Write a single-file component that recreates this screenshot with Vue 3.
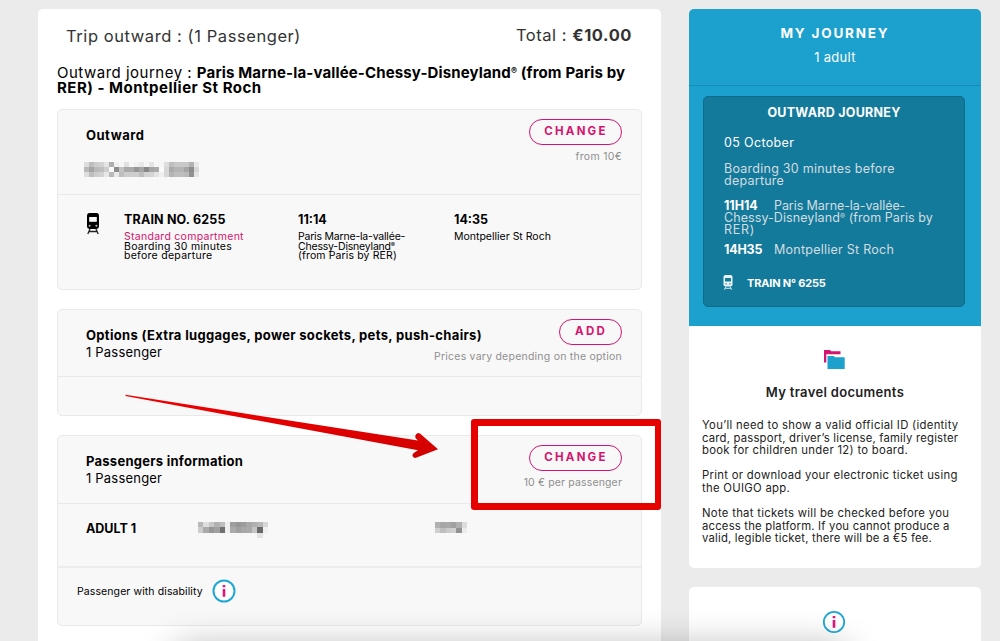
<script setup>
// 打码区域的灰度值，每个数字是一格
const dateMosaic = [
  [222, 190, 205, 210, 228, 175, 240, 246, 225, 246, 240, 232, 246, 228, 246, 246, 222, 190, 200, 200, 200, 178, 232],
  [185, 165, 185, 190, 205, 250, 140, 195, 170, 170, 150, 165, 135, 165, 170, 250, 215, 170, 180, 180, 165, 140, 215],
  [222, 190, 205, 210, 232, 185, 232, 190, 205, 205, 205, 190, 210, 212, 228, 240, 215, 180, 190, 190, 185, 145, 228]
]
const nameMosaic = [
  [184, 222, 200, 178, 190, 240, 158, 150, 156, 168, 176, 184, 214],
  [205, 170, 150, 160, 112, 240, 170, 160, 168, 170, 196, 104, 240],
  [247, 247, 247, 247, 247, 247, 247, 247, 247, 247, 247, 226, 247]
]
const birthMosaic = [
  [178, 166, 168, 160, 176, 220],
  [208, 190, 202, 208, 146, 236]
]

const flatten = (rows) =>
  rows.flatMap((row, y) => row.map((v, x) => ({ x, y, fill: `rgb(${v},${v},${v})` })))

const dateCells = flatten(dateMosaic)
const nameCells = flatten(nameMosaic)
const birthCells = flatten(birthMosaic)
</script>

<template>
  <div class="page">
    <main class="trip">
      <header class="trip-head">
        <h1>Trip outward : (1 Passenger)</h1>
        <p class="total">Total : <b>€10.00</b></p>
      </header>
      <p class="route">
        <span class="route-label">Outward journey : </span><b>Paris Marne-la-vallée-Chessy-Disneyland<sup>®</sup> (from Paris by<br /><span class="route-end">RER) - Montpellier St Roch</span></b>
      </p>

      <section class="panel outward">
        <div class="panel-head">
          <div class="heading">
            <h2 class="t-outward">Outward</h2>
            <svg class="mosaic-date" viewBox="0 0 23 3" preserveAspectRatio="none" shape-rendering="crispEdges">
              <rect v-for="(c, i) in dateCells" :key="i" :x="c.x" :y="c.y" width="1" height="1" :fill="c.fill" />
            </svg>
          </div>
          <div class="action">
            <button class="pill">CHANGE</button>
            <p class="t-from">from 10€</p>
          </div>
        </div>
        <div class="train-row">
          <svg class="train-icon" viewBox="0 0 14 22">
            <path fill="#000" d="M3.500 0h7Q13 0 13 3v10q0 3-3 3H4q-3 0-3-3V3q0-3 2.500-3z" />
            <path fill="#f8f8f8" d="M3.200 4h7.600v4.800H3.200z" />
            <circle cx="3.600" cy="12.700" r="1" fill="#bbb" />
            <circle cx="10.400" cy="12.700" r="1" fill="#bbb" />
            <path fill="none" stroke="#222" stroke-width="1.300" d="M4 16l-2.200 5M10 16l2.200 5M3 18.500h8" />
          </svg>
          <div class="col-train">
            <h3 class="t-train">TRAIN NO. 6255</h3>
            <p><span class="pink">Standard compartment</span><br />Boarding 30 minutes<br />before departure</p>
          </div>
          <div class="col-from">
            <h3>11:14</h3>
            <p>Paris Marne-la-vallée-<br />Chessy-Disneyland<sup>®</sup><br /><span class="by-rer">(from Paris by RER)</span></p>
          </div>
          <div class="col-to">
            <h3>14:35</h3>
            <p>Montpellier St Roch</p>
          </div>
        </div>
      </section>

      <section class="panel options">
        <div class="panel-head">
          <div class="heading">
            <h2 class="t-options">Options (Extra luggages, power sockets, pets, push-chairs)</h2>
            <p class="count">1 Passenger</p>
          </div>
          <div class="action">
            <button class="pill small">ADD</button>
            <p class="t-prices">Prices vary depending on the option</p>
          </div>
        </div>
      </section>

      <section class="panel passengers">
        <div class="panel-head">
          <div class="heading">
            <h2 class="t-info">Passengers information</h2>
            <p class="count">1 Passenger</p>
          </div>
          <div class="action">
            <button class="pill">CHANGE</button>
            <p class="t-per">10 € per passenger</p>
          </div>
        </div>
        <div class="adult-row">
          <h3>ADULT 1</h3>
          <svg class="mosaic-name" viewBox="0 0 13 3" preserveAspectRatio="none" shape-rendering="crispEdges">
            <rect v-for="(c, i) in nameCells" :key="i" :x="c.x" :y="c.y" width="1" height="1" :fill="c.fill" />
          </svg>
          <svg class="mosaic-birth" viewBox="0 0 6 2" preserveAspectRatio="none" shape-rendering="crispEdges">
            <rect v-for="(c, i) in birthCells" :key="i" :x="c.x" :y="c.y" width="1" height="1" :fill="c.fill" />
          </svg>
        </div>
        <div class="disability-row">
          <span>Passenger with disability</span>
          <svg class="info-icon" viewBox="0 0 24 24">
            <circle cx="12" cy="12" r="10.500" fill="#fff" stroke="#1fa8d5" stroke-width="2" />
            <path fill="#e0157a" d="M10.700 6h2.600v2.200h-2.600zM10.700 10h2.600v7.700h-2.600z" />
          </svg>
        </div>
      </section>
    </main>

    <aside class="side">
      <section class="journey">
        <header>
          <h2>MY JOURNEY</h2>
          <p>1 adult</p>
        </header>
        <div class="journey-box">
          <h3>OUTWARD JOURNEY</h3>
          <p class="date">05 October</p>
          <p class="boarding">Boarding 30 minutes before<br />departure</p>
          <p class="stop"><b>11H14</b>Paris Marne-la-vallée-<br /><span class="disney">Chessy-Disneyland<sup>®</sup> (from Paris by</span><br /><span class="rer">RER)</span></p>
          <p class="stop arrival"><b>14H35</b>Montpellier St Roch</p>
          <div class="train-no">
            <svg viewBox="0 0 10 15">
              <path fill="#e8f4f8" d="M2.500 0h5Q9.500 0 9.500 2v7.500q0 2-2 2h-5q-2 0-2-2V2q0-2 2-2z" />
              <path fill="#147a9b" d="M2 3h6v3.500H2zM2.500 8.300h1.200v1.200H2.500zM6.300 8.300h1.200v1.200H6.300z" />
              <path fill="none" stroke="#d5e8ee" d="M3 11.500l-1.700 3.200M7 11.500l1.700 3.200M2 13.300h6" />
            </svg>
            <span>TRAIN N° 6255</span>
          </div>
        </div>
      </section>

      <section class="docs">
        <svg class="folder-icon" viewBox="0 0 21 20">
          <path fill="#d4146e" d="M0 0h6l1.200 1.200h9.300v3H2.300V12.500H0z" />
          <path fill="#1ca1cf" d="M3.500 6h6.300l1.200 1.300h9.700V19H3.500z" />
        </svg>
        <h3>My travel documents</h3>
        <p>You’ll need to show a valid official ID (identity<br /><span class="tight">card, passport, driver’s license, family register</span><br />book for children under 12) to board.</p>
        <p>Print or download your electronic ticket using<br />the OUIGO app.</p>
        <p>Note that tickets will be checked before you<br /><span class="tight">access the platform. If you cannot produce a<br />valid, legible ticket, there will be a €5 fee.</span></p>
      </section>

      <section class="help">
        <svg class="info-icon" viewBox="0 0 24 24">
          <circle cx="12" cy="12" r="10.200" fill="#fff" stroke="#1fa8d5" stroke-width="1.800" />
          <path fill="#e0157a" d="M10.700 6h2.600v2.200h-2.600zM10.700 10h2.600v7.700h-2.600z" />
        </svg>
      </section>
    </aside>

    <!-- 标注箭头与红框 -->
    <svg class="arrow" viewBox="0 0 330 80">
      <defs>
        <linearGradient id="arrowFill" x1="0" y1="0" x2="0" y2="1">
          <stop offset="0" stop-color="#f20000" />
          <stop offset="1" stop-color="#cf0000" />
        </linearGradient>
      </defs>
      <path fill="url(#arrowFill)" d="M5.500 4.800L298 50.500l-2.500-2.500q-1-4 2.500-5 1.500 0 2.500 1L318 59.300 296 67.800q-3 .500-3.500-2-.200-1.700 1.500-3l4-2.500L5.500 6z" />
    </svg>
    <div class="frame"></div>
    <div class="dock-shadow"></div>
  </div>
</template>

<style>
html,
body {
  margin: 0;
  overflow: hidden;
  background: #ebebeb;
}
</style>

<style scoped>
.page {
  position: relative;
  box-sizing: border-box;
  width: 1000px;
  height: 641px;
  padding: 9px 19px 0 38px;
  display: flex;
  justify-content: space-between;
  overflow: hidden;
  background: #ebebeb;
  font-family: Inter, "Liberation Sans", sans-serif;
  color: #000;
}

h1,
h2,
h3,
p {
  margin: 0;
  font-weight: 400;
  white-space: nowrap;
}

b,
h2,
h3 {
  font-weight: 700;
}

sup {
  font-size: 0.6em;
  line-height: 0;
  vertical-align: 0.42em;
}

/* 左侧行程 */
.trip {
  box-sizing: border-box;
  width: 623px;
  height: 660px;
  padding: 0 19px;
  background: #fff;
  border-radius: 5px;
}

.trip-head {
  display: flex;
  justify-content: space-between;
  height: 56px;
  padding: 16px 10px 0 9px;
  box-sizing: border-box;
  color: #333;
}

.trip-head h1 {
  font-size: 16.5px;
  line-height: 22px;
  letter-spacing: 0.57px;
}

.total {
  font-size: 16.5px;
  line-height: 20px;
  letter-spacing: 0.55px;
}

.route {
  height: 44px;
  font-size: 15px;
  line-height: 15px;
  letter-spacing: 0.14px;
}

.route-label {
  letter-spacing: 0.5px;
}

.route-end {
  letter-spacing: 0.5px;
}

.panel {
  box-sizing: border-box;
  width: 585px;
  border: 1px solid #e9e9e9;
  border-radius: 5px;
  background: #f8f8f8;
  margin-bottom: 19px;
}

.panel-head {
  box-sizing: border-box;
  display: flex;
  justify-content: space-between;
  padding: 9px 19px 0 28px;
  border-bottom: 1px solid #e9e9e9;
}

.heading {
  min-width: 0;
}

.panel h2 {
  font-size: 13px;
  line-height: 17px;
}

.action {
  display: flex;
  flex-direction: column;
  flex-shrink: 0;
  align-items: flex-end;
}

.action p {
  font-size: 10.5px;
  line-height: 13px;
  margin-top: 5px;
  color: #8f8f8f;
}

.pill {
  box-sizing: border-box;
  width: 93px;
  height: 26px;
  padding: 0 0 2px 1px;
  border: 1px solid #d4146e;
  border-radius: 13px;
  background: transparent;
  color: #d4146e;
  font-family: inherit;
  font-size: 11.5px;
  font-weight: 700;
  letter-spacing: 2.2px;
}

.pill.small {
  width: 63px;
}

.outward {
  height: 181px;
}

.outward .panel-head {
  height: 85px;
}

.panel h2.t-outward {
  padding-top: 8px;
  letter-spacing: 0.5px;
}

.t-options {
  letter-spacing: 0.33px;
}

.t-info {
  letter-spacing: 0.26px;
}

.action .t-from {
  letter-spacing: 0.3px;
}

.action .t-prices {
  letter-spacing: 0.23px;
}

.action .t-per {
  letter-spacing: 0.15px;
}

.mosaic-date {
  display: block;
  width: 115px;
  height: 15px;
  margin: 18px 0 0 -2px;
}

.train-row {
  display: flex;
  padding: 18px 0 0 28px;
}

.train-icon {
  width: 14px;
  height: 22px;
}

.train-row h3,
.adult-row h3 {
  font-size: 12.5px;
  line-height: 13px;
}

.train-row p {
  margin-top: 6px;
  font-size: 10.5px;
  line-height: 9.5px;
}

.col-train {
  width: 174px;
  margin-left: 24px;
}

.col-train h3 {
  letter-spacing: 0.17px;
}

.col-train p {
  letter-spacing: 0.28px;
}

.col-from {
  width: 156px;
}

.col-from p {
  letter-spacing: -0.2px;
}

.by-rer {
  letter-spacing: 0.13px;
}

.pink {
  color: #d4146e;
}

.options {
  height: 107px;
}

.options .panel-head {
  height: 67px;
}

.options h2,
.passengers h2 {
  padding-top: 8px;
}

.count {
  font-size: 13px;
  line-height: 17px;
  letter-spacing: 0.2px;
}

.passengers {
  height: 191px;
}

.passengers .panel-head {
  height: 68px;
}

.adult-row {
  box-sizing: border-box;
  display: flex;
  height: 64px;
  padding: 18px 0 0 28px;
  border-bottom: 2px solid #ececec;
}

.adult-row h3 {
  width: 112px;
}

.mosaic-name {
  width: 70px;
  height: 16px;
}

.mosaic-birth {
  width: 32px;
  height: 11px;
  margin-left: 167px;
}

.disability-row {
  display: flex;
  align-items: center;
  gap: 9px;
  padding: 11px 0 0 19px;
  font-size: 10.5px;
  letter-spacing: 0.1px;
}

.info-icon {
  display: block;
  width: 24px;
  height: 24px;
}

/* 右侧栏 */
.side {
  width: 292px;
}

.journey {
  box-sizing: border-box;
  height: 317px;
  background: #1ca1cf;
  border-radius: 5px 5px 0 0;
  color: #fff;
}

.journey header {
  box-sizing: border-box;
  height: 77px;
  padding-top: 16px;
  border-bottom: 1px solid #168bb3;
  text-align: center;
}

.journey header h2 {
  font-size: 13.5px;
  line-height: 17px;
  letter-spacing: 1.8px;
}

.journey header p {
  font-size: 13px;
  line-height: 16px;
  margin-top: 7px;
  letter-spacing: 0.3px;
}

.journey-box {
  box-sizing: border-box;
  width: 262px;
  height: 211px;
  margin: 10px auto 0 14px;
  padding: 8px 20px 0;
  border: 1px solid #116b88;
  border-radius: 5px;
  background: #147a9b;
  font-size: 12.5px;
  line-height: 12px;
  color: #d3dde0;
}

.journey-box h3 {
  font-size: 12.5px;
  line-height: 16px;
  letter-spacing: 0.25px;
  text-align: center;
  color: #fff;
}

.journey-box .date {
  margin-top: 16px;
  color: #fff;
  letter-spacing: 0.35px;
}

.boarding {
  margin-top: 14px;
  letter-spacing: 0.25px;
}

.stop {
  margin-top: 13px;
  letter-spacing: -0.07px;
}

.stop b {
  display: inline-block;
  width: 50px;
  color: #fff;
}

.disney {
  letter-spacing: 0.08px;
}

.rer {
  letter-spacing: 0.7px;
}

.stop.arrival {
  margin-top: 8px;
  letter-spacing: 0.25px;
}

.arrival b {
  letter-spacing: -0.2px;
}

.train-no {
  display: flex;
  align-items: center;
  gap: 14px;
  margin-top: 19px;
  margin-left: -1px;
  font-size: 11px;
  font-weight: 700;
  letter-spacing: -0.18px;
  color: #fff;
}

.train-no svg {
  width: 10px;
  height: 15px;
}

.docs {
  box-sizing: border-box;
  height: 242px;
  padding: 24px 13px 0;
  border-radius: 3px 3px 5px 5px;
  background: #fff;
  color: #222;
}

.folder-icon {
  display: block;
  width: 21px;
  height: 20px;
  margin: 0 auto 0 122px;
}

.docs h3 {
  margin: 14px 0 18px;
  font-size: 13px;
  font-weight: 600;
  line-height: 17px;
  letter-spacing: 0.32px;
  text-align: center;
}

.docs p {
  font-size: 11.3px;
  line-height: 12.6px;
  letter-spacing: 0.3px;
  margin-bottom: 12.5px;
}

.docs .tight {
  letter-spacing: 0.2px;
}

.help {
  height: 80px;
  margin-top: 19px;
  padding-top: 23px;
  border-radius: 5px;
  background: #fff;
}

.help .info-icon {
  margin: 0 0 0 133px;
}

/* 标注层 */
.arrow {
  position: absolute;
  left: 120px;
  top: 390px;
  width: 330px;
  height: 80px;
}

.frame {
  position: absolute;
  box-sizing: border-box;
  left: 471px;
  top: 419px;
  width: 190px;
  height: 91px;
  border: 7px solid #e60000;
  border-width: 7px 6px 7px 7px;
  border-radius: 3px;
}

.dock-shadow {
  position: absolute;
  left: 180px;
  top: 651px;
  width: 660px;
  height: 40px;
  box-shadow: 0 0 36px 4px rgba(0, 0, 0, 0.3);
}
</style>
